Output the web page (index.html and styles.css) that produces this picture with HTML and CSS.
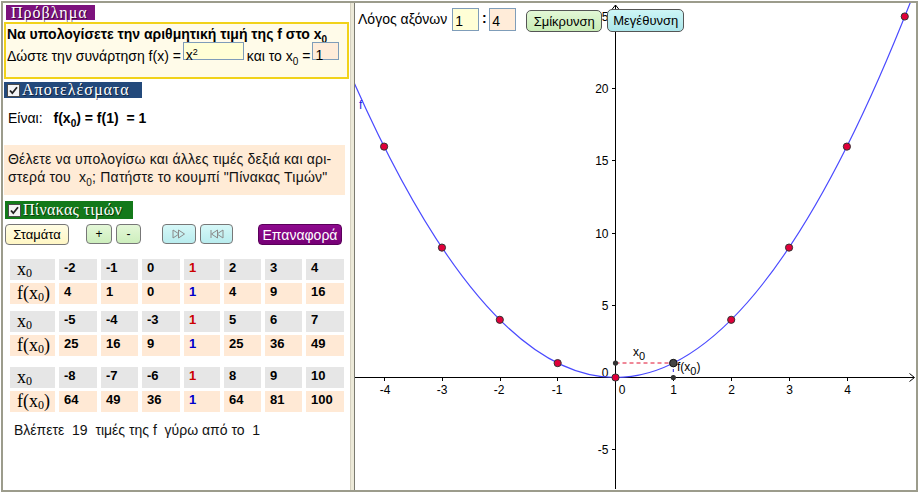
FILE: index.html
```html
<!DOCTYPE html>
<html lang="el">
<head>
<meta charset="utf-8">
<title>Αριθμητική τιμή</title>
<link rel="stylesheet" href="styles.css">
</head>
<body>
<div class="app">
  <div class="left">
    <div class="hdr hdr-purple">Πρόβλημα</div>
    <div class="problem">
      <div class="line1">Να υπολογίσετε την αριθμητική τιμή της f στο x<sub>0</sub></div>
      <div class="line2">
        <span class="lt">Δώστε την συνάρτηση f(x) =</span>
        <span class="inp inp-y fx">x<sup>2</sup></span>
        <span class="lt lt2">και το x<sub>0</sub> =</span>
        <span class="inp inp-p x0">1</span>
      </div>
    </div>
    <div class="hdr hdr-blue"><svg class="chk" width="13" height="13" viewBox="0 0 13 13"><rect x="0.5" y="0.5" width="12" height="12" fill="#f4f4f4" stroke="#4a4a4a"/><path d="M3 6.5 L5.3 9.2 L10 3.2" fill="none" stroke="#222" stroke-width="1.8"/></svg>Αποτελέσματα</div>
    <div class="result">Είναι:<b class="res">f(x<sub>0</sub>) = f(1) &nbsp;= 1</b></div>
    <div class="note">Θέλετε να υπολογίσω και άλλες τιμές δεξιά και αρι-<br>στερά του &nbsp;x<sub>0</sub>; Πατήστε το κουμπί "Πίνακας Τιμών"</div>
    <div class="hdr hdr-green"><svg class="chk" width="13" height="13" viewBox="0 0 13 13"><rect x="0.5" y="0.5" width="12" height="12" fill="#f4f4f4" stroke="#4a4a4a"/><path d="M3 6.5 L5.3 9.2 L10 3.2" fill="none" stroke="#222" stroke-width="1.8"/></svg>Πίνακας τιμών</div>
    <div class="btns">
      <button class="btn b-stop">Σταμάτα</button>
      <button class="btn b-pm b-plus">+</button>
      <button class="btn b-pm b-minus">-</button>
      <button class="btn b-ff"><svg width="16" height="10" viewBox="0 0 16 10"><path d="M2 1 L8 5 L2 9 Z M7.5 1 L13.5 5 L7.5 9 Z" fill="none" stroke="#8a8a8a" stroke-width="1"/></svg></button>
      <button class="btn b-ff b-rw"><svg width="16" height="10" viewBox="0 0 16 10"><path d="M14 1 L8 5 L14 9 Z M8.5 1 L2.5 5 L8.5 9 Z M2 1 L2 9" fill="none" stroke="#8a8a8a" stroke-width="1"/></svg></button>
      <button class="btn b-reset">Επαναφορά</button>
    </div>

    <div class="tbl tbl1">
      <div class="c lab g">x<sub>0</sub></div><div class="c g">-2</div><div class="c g">-1</div><div class="c g">0</div><div class="c g red">1</div><div class="c g">2</div><div class="c g">3</div><div class="c g">4</div>
      <div class="c lab p">f(x<sub>0</sub>)</div><div class="c p">4</div><div class="c p">1</div><div class="c p">0</div><div class="c p blue">1</div><div class="c p">4</div><div class="c p">9</div><div class="c p">16</div>
    </div>
    <div class="tbl tbl2">
      <div class="c lab g">x<sub>0</sub></div><div class="c g">-5</div><div class="c g">-4</div><div class="c g">-3</div><div class="c g red">1</div><div class="c g">5</div><div class="c g">6</div><div class="c g">7</div>
      <div class="c lab p">f(x<sub>0</sub>)</div><div class="c p">25</div><div class="c p">16</div><div class="c p">9</div><div class="c p blue">1</div><div class="c p">25</div><div class="c p">36</div><div class="c p">49</div>
    </div>
    <div class="tbl tbl3">
      <div class="c lab g">x<sub>0</sub></div><div class="c g">-8</div><div class="c g">-7</div><div class="c g">-6</div><div class="c g red">1</div><div class="c g">8</div><div class="c g">9</div><div class="c g">10</div>
      <div class="c lab p">f(x<sub>0</sub>)</div><div class="c p">64</div><div class="c p">49</div><div class="c p">36</div><div class="c p blue">1</div><div class="c p">64</div><div class="c p">81</div><div class="c p">100</div>
    </div>
    <div class="summary">Βλέπετε  19  τιμές της f  γύρω από το  1</div>
  </div>

  <div class="split"></div>

  <div class="graph">
    <svg class="plot" width="560" height="486" viewBox="355 3 560 486">
      <g class="axes" stroke="#000" stroke-width="1" fill="none">
        <line x1="355" y1="377.5" x2="914" y2="377.5"/>
        <path d="M909.5 373.5 L914.5 377.5 L909.5 381.5"/>
        <line x1="615.5" y1="5" x2="615.5" y2="489"/>
        <path d="M611.5 10 L615.5 5 L619.5 10"/>
        <line x1="384.5" y1="377.5" x2="384.5" y2="381"/>
        <line x1="442.5" y1="377.5" x2="442.5" y2="381"/>
        <line x1="500.5" y1="377.5" x2="500.5" y2="381"/>
        <line x1="557.5" y1="377.5" x2="557.5" y2="381"/>
        <line x1="673.5" y1="377.5" x2="673.5" y2="381"/>
        <line x1="731.5" y1="377.5" x2="731.5" y2="381"/>
        <line x1="789.5" y1="377.5" x2="789.5" y2="381"/>
        <line x1="847.5" y1="377.5" x2="847.5" y2="381"/>
        <line x1="612" y1="16.5" x2="615.5" y2="16.5"/>
        <line x1="612" y1="88.5" x2="615.5" y2="88.5"/>
        <line x1="612" y1="160.5" x2="615.5" y2="160.5"/>
        <line x1="612" y1="233.5" x2="615.5" y2="233.5"/>
        <line x1="612" y1="305.5" x2="615.5" y2="305.5"/>
        <line x1="612" y1="449.5" x2="615.5" y2="449.5"/>
      </g>
      <g class="lbl" font-family="Liberation Sans, Arial, sans-serif" font-size="12" fill="#000">
        <text x="385" y="394" text-anchor="middle">-4</text>
        <text x="442" y="394" text-anchor="middle">-3</text>
        <text x="499" y="394" text-anchor="middle">-2</text>
        <text x="557" y="394" text-anchor="middle">-1</text>
        <text x="622" y="394" text-anchor="middle">0</text>
        <text x="673.5" y="394" text-anchor="middle">1</text>
        <text x="731.5" y="394" text-anchor="middle">2</text>
        <text x="789.5" y="394" text-anchor="middle">3</text>
        <text x="847.5" y="394" text-anchor="middle">4</text>
        <text x="608.5" y="21" text-anchor="end">25</text>
        <text x="608.5" y="93" text-anchor="end">20</text>
        <text x="608.5" y="165" text-anchor="end">15</text>
        <text x="608.5" y="238" text-anchor="end">10</text>
        <text x="608.5" y="310" text-anchor="end">5</text>
        <text x="608.5" y="454" text-anchor="end">-5</text>
        <text x="605" y="377" text-anchor="middle">0</text>
        <text x="633" y="356">x<tspan dy="4" font-size="11">0</tspan></text>
        <text x="677" y="371">f(x<tspan dy="4" font-size="11">0</tspan><tspan dy="-4">)</tspan></text>
        <text x="359" y="109" fill="#2020e0">f</text>
      </g>
      <path d="M349.39 71.95 Q631.41 719.58 913.43 -5.48" fill="none" stroke="#4a4aff" stroke-width="1.2"/>
      <line x1="615.5" y1="363" x2="673.3" y2="363" stroke="#e01030" stroke-width="1" stroke-dasharray="4 3"/>
      <line x1="673.3" y1="363" x2="673.3" y2="377.5" stroke="#2020e0" stroke-width="1" stroke-dasharray="3 3"/>
      <g fill="#e0003a" stroke="#333" stroke-width="1">
        <circle cx="384.1" cy="146.6" r="3.6"/>
        <circle cx="441.95" cy="247.6" r="3.6"/>
        <circle cx="499.8" cy="319.8" r="3.6"/>
        <circle cx="557.65" cy="363.1" r="3.6"/>
        <circle cx="615.5" cy="377.5" r="3.6"/>
        <circle cx="731.2" cy="319.8" r="3.6"/>
        <circle cx="789.05" cy="247.6" r="3.6"/>
        <circle cx="846.9" cy="146.6" r="3.6"/>
        <circle cx="904.75" cy="16.5" r="3.6"/>
      </g>
      <circle cx="673.35" cy="363.1" r="3.8" fill="#444" stroke="#111" stroke-width="1"/>
      <circle cx="615.5" cy="363.1" r="2.6" fill="#333"/>
      <circle cx="673.35" cy="377.5" r="2.6" fill="#333"/>
    </svg>
    <div class="toolbar">
      <span class="tlabel">Λόγος αξόνων</span>
      <span class="inp inp-y tin">1</span>
      <span class="colon">:</span>
      <span class="inp inp-p tin">4</span>
      <button class="btn b-zoom-out">Σμίκρυνση</button>
      <button class="btn b-zoom-in">Μεγέθυνση</button>
    </div>
  </div>
</div>
</body>
</html>
```

FILE: styles.css
```css
* { box-sizing: border-box; }
html, body { margin: 0; padding: 0; background: #fff; }
body { font-family: "Liberation Sans", Arial, sans-serif; color: #000; }

.app {
  display: flex;
  width: 917px;
  height: 491px;
  margin: 1px 0 0 1px;
  border: 2px solid #9c9c8c;
  background: #fff;
}

.left {
  width: 347px;
  display: flex;
  flex-direction: column;
  align-items: flex-start;
  padding-top: 2px;
}

.hdr {
  display: flex;
  align-items: center;
  color: #fff;
  font-family: "Liberation Serif", "Times New Roman", serif;
  font-size: 16px;
  letter-spacing: 1px;
  text-shadow: 1px 1px 0 rgba(0, 0, 0, 0.55);
  white-space: nowrap;
}
.hdr-purple { margin-left: 3px; height: 15px; width: 89px; padding-left: 5px; background: #7d127d; line-height: 15px; }
.hdr-blue { margin-top: 3px; margin-left: 1px; height: 16px; width: 138px; padding-left: 3px; background: #23497b; }
.hdr-green { margin-top: 6px; margin-left: 2px; height: 18px; width: 128px; padding-left: 3px; background: #13791a; letter-spacing: 0.3px; }
.chk { margin-right: 2px; flex: none; }

.problem {
  margin-top: 2px;
  margin-left: 1px;
  width: 345px;
  height: 57px;
  border: 2px solid #f1d21a;
  background: #fffbe9;
  padding: 3px 0 0 1px;
}
.line1 { font-weight: bold; font-size: 14px; line-height: 15px; white-space: nowrap; }
.line1 sub, .result sub, .note sub, .lt sub { font-size: 10px; vertical-align: -4px; line-height: 0; }
.line2 { display: flex; align-items: flex-start; font-size: 14px; height: 20px; white-space: nowrap; }
.lt { padding-top: 6px; line-height: 16px; }
.lt2 { margin-left: 3px; margin-right: 2px; }

.inp {
  display: inline-block;
  height: 18px;
  border: 1px solid #7f9db9;
  font-size: 14px;
  line-height: 16px;
  padding: 2px 0 0 2px;
}
.inp-y { background: #ffffd6; }
.inp-p { background: #ffecd9; }
.fx { width: 61px; margin-left: 2px; padding-top: 4px; }
.fx sup { font-size: 9px; vertical-align: 5px; line-height: 0; }
.x0 { width: 27px; padding-top: 4px; }

.result { margin-top: 10px; margin-left: 5px; height: 20px; line-height: 20px; font-size: 14px; white-space: nowrap; }
.res { margin-left: 11px; }

.note {
  margin-top: 17px;
  margin-left: 1px;
  width: 341px;
  height: 50px;
  padding: 5px 4px;
  background: #ffebd6;
  font-size: 14px;
  line-height: 18px;
  letter-spacing: 0.2px;
  color: #111;
  white-space: nowrap;
}

.btns { margin-top: 5px; margin-left: 2px; display: flex; align-items: flex-start; height: 21px; }
.btn {
  display: flex;
  align-items: center;
  justify-content: center;
  border: 1px solid #777;
  border-radius: 4px;
  font-family: "Liberation Sans", Arial, sans-serif;
  font-size: 13px;
  padding: 0;
  color: #000;
  height: 21px;
}
.b-stop { width: 64px; background: linear-gradient(#fffde4, #fff6c4); }
.b-pm { width: 25px; height: 20px; background: linear-gradient(#e4f7d8, #cdeebd); font-size: 12px; }
.b-plus { margin-left: 17px; width: 26px; }
.b-minus { margin-left: 4px; }
.b-ff { margin-left: 21px; width: 34px; height: 20px; background: linear-gradient(#d6f8f8, #b9ecee); }
.b-rw { margin-left: 4px; width: 33px; }
.b-reset { margin-left: 25px; width: 84px; background: linear-gradient(#8e0a8e, #760076); color: #fff; font-size: 14px; border-color: #5a005a; }

.tbl {
  margin-left: 7px;
  display: grid;
  grid-template-columns: 45px 38px 37px 38px 36px 37px 37px 38px;
  grid-auto-rows: 21px;
  column-gap: 4px;
  row-gap: 3px;
}
.tbl1 { margin-top: 14px; }
.tbl2 { margin-top: 7px; }
.tbl3 { margin-top: 11px; }
.c { font-weight: bold; font-size: 13px; line-height: 18px; padding-left: 5px; }
.g { background: #e6e6e6; }
.p { background: #ffe9d5; }
.red { color: #cc0000; }
.blue { color: #0000cc; }
.lab {
  font-family: "Liberation Serif", "Times New Roman", serif;
  font-weight: normal;
  font-size: 18px;
  line-height: 21px;
  padding-left: 7px;
}
.lab sub { font-size: 12px; vertical-align: -2px; line-height: 0; }

.summary { margin-top: 9px; margin-left: 11px; font-size: 14px; line-height: 18px; white-space: pre; color: #111; }

.split {
  width: 5px;
  background: #ece9d8;
  border-left: 1px solid #d4d0c0;
  border-right: 1px solid #7a7a70;
}

.graph { position: relative; flex: 1; background: #fff; overflow: hidden; }
.plot { display: block; }

.toolbar {
  position: absolute;
  top: 5px;
  left: 3px;
  display: flex;
  align-items: flex-start;
  white-space: nowrap;
}
.tlabel { font-size: 14px; line-height: 23px; margin-right: 5px; }
.tin { width: 27px; height: 23px; padding-top: 4px; }
.colon { font-weight: bold; font-size: 14px; width: 10px; text-align: center; line-height: 20px; }
.b-zoom-out { margin-left: 10px; margin-top: 2px; width: 76px; height: 22px; border-radius: 5px; border-color: #555; background: linear-gradient(#e2f7d6, #c8ecb6); }
.b-zoom-in { margin-left: 5px; margin-top: 1px; width: 77px; height: 23px; border-radius: 5px; border-color: #555; background: linear-gradient(#cdf6f6, #ace6ea); }
```
